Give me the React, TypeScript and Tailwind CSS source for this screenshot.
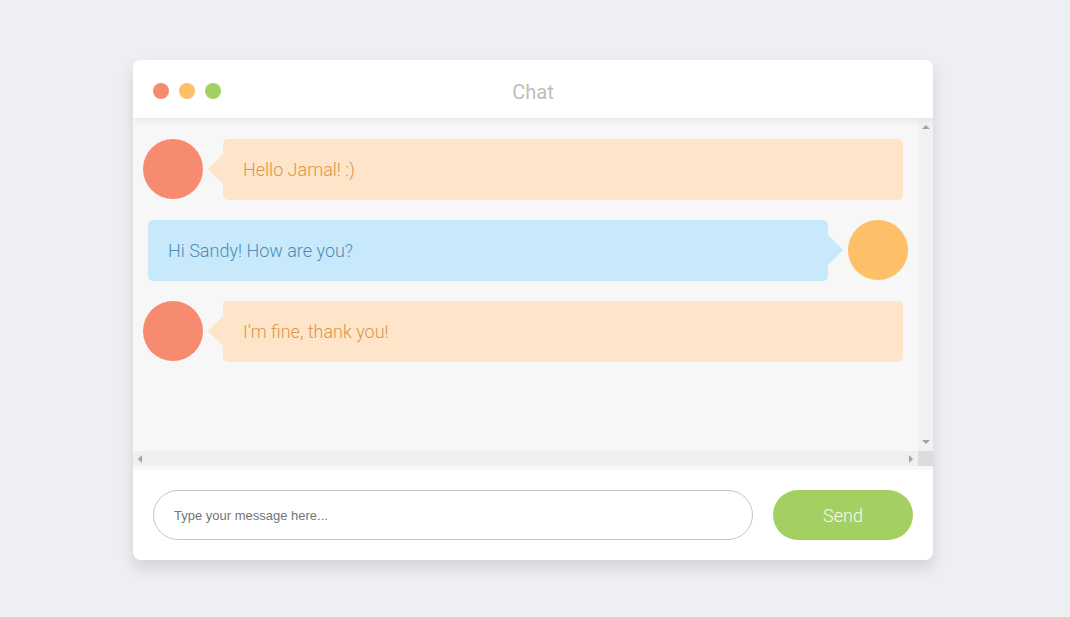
const MESSAGES: Array<{ text: string; mine: boolean }> = [
  { text: "Hello Jamal! :)", mine: false },
  { text: "Hi Sandy! How are you?", mine: true },
  { text: "I'm fine, thank you!", mine: false },
];

function Message({ text, mine }: { text: string; mine: boolean }) {
  if (mine) {
    return (
      <div className="ml-[15px] flex w-[760px] items-start">
        <div className="relative flex h-[61px] w-[680px] items-center rounded-[5px] bg-[#c8e9fb] pl-5 text-[18px] font-light text-[#4f8cb3]">
          {text}
          <span className="absolute right-[-15px] top-[15px] h-0 w-0 border-y-[15px] border-l-[15px] border-y-transparent border-l-[#c8e9fb]" />
        </div>
        <div className="ml-5 h-[60px] w-[60px] rounded-full bg-[#fdbf68]" />
      </div>
    );
  }
  return (
    <div className="ml-[10px] flex w-[760px] items-start">
      <div className="mr-5 h-[60px] w-[60px] rounded-full bg-[#f78b70]" />
      <div className="relative flex h-[61px] w-[680px] items-center rounded-[5px] bg-[#fee5c9] pl-5 text-[18px] font-light text-[#d9954a]">
        {text}
        <span className="absolute left-[-15px] top-[15px] h-0 w-0 border-y-[15px] border-r-[15px] border-y-transparent border-r-[#fee5c9]" />
      </div>
    </div>
  );
}

export default function App() {
  return (
    <div className="flex h-[617px] w-full items-start justify-center bg-[#eeeff3] pr-[4px] pt-[60px] font-['Roboto',sans-serif]">
      <div className="flex h-[500px] w-[800px] flex-col overflow-hidden rounded-[8px] bg-white shadow-[0_8px_16px_rgba(0,0,0,0.12)]">
        {/* title bar */}
        <div className="relative z-10 flex h-[58px] shrink-0 items-center bg-white px-5 pt-1 shadow-[0_2px_8px_rgba(0,0,0,0.07)]">
          <div className="flex gap-[10px]">
            <span className="h-4 w-4 rounded-full bg-[#f78b70]" />
            <span className="h-4 w-4 rounded-full bg-[#fdbf68]" />
            <span className="h-4 w-4 rounded-full bg-[#a3d063]" />
          </div>
          <div className="pointer-events-none absolute inset-x-0 pt-[2px] text-center text-[20px] text-[#bdbdbd]">
            Chat
          </div>
        </div>

        {/* messages + scrollbars */}
        <div className="flex h-[348px] shrink-0 flex-col bg-[#f7f7f7]">
          <div className="flex min-h-0 flex-1">
            <div className="flex flex-1 flex-col gap-5 overflow-hidden pt-[21px]">
              {MESSAGES.map((m, i) => (
                <Message key={i} text={m.text} mine={m.mine} />
              ))}
            </div>
            <div className="flex w-[15px] flex-col items-center justify-between bg-[#f1f1f1] py-[7px]">
              <span className="h-0 w-0 border-x-[4px] border-b-[4px] border-x-transparent border-b-[#a3a3a3]" />
              <span className="h-0 w-0 border-x-[4px] border-t-[4px] border-x-transparent border-t-[#a3a3a3]" />
            </div>
          </div>
          <div className="flex h-[15px]">
            <div className="flex flex-1 items-center justify-between bg-[#efefef] px-[5px]">
              <span className="h-0 w-0 border-y-[4px] border-r-[4px] border-y-transparent border-r-[#a3a3a3]" />
              <span className="h-0 w-0 border-y-[4px] border-l-[4px] border-y-transparent border-l-[#a3a3a3]" />
            </div>
            <div className="w-[15px] bg-[#dcdcdc]" />
          </div>
        </div>

        {/* input */}
        <div className="flex flex-1 items-start gap-5 border-t-4 border-[#f7f7f7] px-5 pt-5">
          <input
            type="text"
            placeholder="Type your message here..."
            className="h-[50px] w-[600px] rounded-full border border-[#c4c4c4] bg-white px-5 font-['Liberation_Sans',sans-serif] text-[13px] text-[#555] outline-none placeholder:text-[#757575]"
          />
          <button
            type="button"
            className="h-[50px] w-[140px] rounded-full bg-[#a4d063] text-[18px] font-light text-[#f6fbee]"
          >
            Send
          </button>
        </div>
      </div>
    </div>
  );
}
